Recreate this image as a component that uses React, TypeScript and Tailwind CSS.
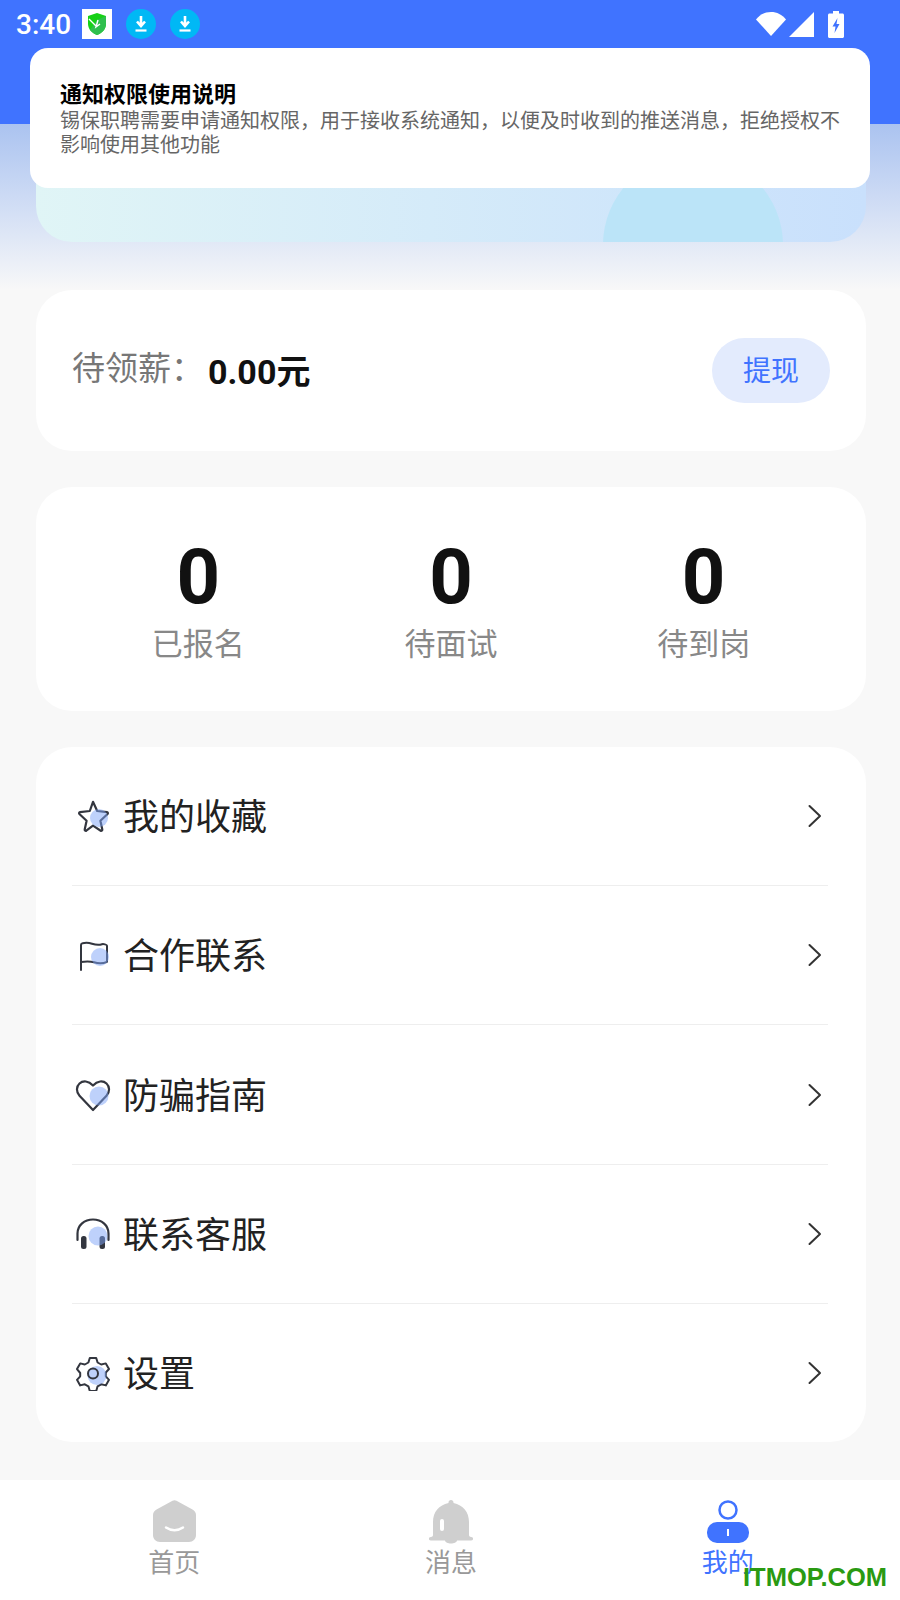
const menu = [
  { label: '我的收藏', icon: <StarIcon /> },
  { label: '合作联系', icon: <FlagIcon /> },
  { label: '防骗指南', icon: <HeartIcon /> },
  { label: '联系客服', icon: <HeadsetIcon /> },
  { label: '设置', icon: <GearIcon /> },
];

const stats = [
  { value: '0', label: '已报名' },
  { value: '0', label: '待面试' },
  { value: '0', label: '待到岗' },
];

function StarIcon() {
  return (
    <svg width="36" height="36" viewBox="0 0 36 36" fill="none">
      <path d="M18 3.800l4.200 9.200 9.800 1.200c.9.100 1.200 1.200.6 1.800l-7.200 6.800 1.900 8.800c.2.900-.8 1.600-1.600 1.100L18 27.700 11.300 32.700c-.8.500-1.800-.2-1.600-1.100l1.900-8.800-7.200-6.800c-.6-.6-.3-1.700.6-1.800l9.800-1.200z" stroke="#33363f" strokeWidth="2.200" strokeLinejoin="round" />
      <circle cx="24" cy="20" r="9" fill="#7ea3f7" fillOpacity="0.5" />
    </svg>
  );
}

function FlagIcon() {
  return (
    <svg width="36" height="36" viewBox="0 0 36 36" fill="none">
      <path d="M6 33V8c0-1 .5-1.600 1.500-1.800 3-.7 6-.7 9.500.5 4 1.300 7 1.500 10 .5 1.200-.4 5 .3 5 1.600v16c-4 1.800-8.500 1.800-13 .5-3-.8-8-.9-13-.3" stroke="#33363f" strokeWidth="2" strokeLinecap="round" strokeLinejoin="round" />
      <circle cx="25" cy="20" r="9" fill="#7ea3f7" fillOpacity="0.5" />
    </svg>
  );
}

function HeartIcon() {
  return (
    <svg width="36" height="36" viewBox="0 0 36 36" fill="none">
      <path d="M18 33L4.500 18.800C1 15 1.200 9.500 4.500 6.500c3.500-3.200 9-2.800 13.500 2 4.500-4.800 10-5.200 13.500-2 3.300 3 3.500 8.500 0 12.300z" stroke="#33363f" strokeWidth="2.200" strokeLinejoin="round" />
      <circle cx="24" cy="19" r="9.500" fill="#7ea3f7" fillOpacity="0.5" />
    </svg>
  );
}

function HeadsetIcon() {
  return (
    <svg width="36" height="36" viewBox="0 0 36 36" fill="none">
      <path d="M2.500 24v-6.500C2.500 9 9.500 3.500 18 3.500S33.500 9 33.500 17.500V24" stroke="#33363f" strokeWidth="2.200" strokeLinecap="round" />
      <rect x="6" y="20" width="5.500" height="13" rx="2.500" fill="#33363f" />
      <rect x="24.500" y="20" width="5.500" height="13" rx="2.500" fill="#33363f" />
      <circle cx="23" cy="20" r="9.500" fill="#7ea3f7" fillOpacity="0.5" />
    </svg>
  );
}

function GearIcon() {
  return (
    <svg width="36" height="36" viewBox="0 0 36 36" fill="none">
      <path d="M14.800 3h6.400l1.400 4.500 3.600 2 4.600-1.100 3.200 5.600-3.200 3.500v3.800l3.200 3.500-3.200 5.600-4.600-1.100-3.600 2-1.400 4.700h-6.400l-1.400-4.700-3.600-2-4.600 1.100-3.200-5.600 3.200-3.500V18l-3.200-3.900L5.200 8.400l4.600 1.100 3.600-2z" stroke="#33363f" strokeWidth="2" strokeLinejoin="round" />
      <circle cx="22" cy="20.500" r="9.500" fill="#7ea3f7" fillOpacity="0.5" />
      <circle cx="18" cy="18.500" r="5" stroke="#33363f" strokeWidth="2" />
    </svg>
  );
}

function Chevron() {
  return (
    <svg width="16" height="24" viewBox="0 0 16 24" fill="none">
      <path d="M2.500 2l10.500 10L2.500 22" stroke="#333" strokeWidth="2" strokeLinecap="round" strokeLinejoin="round" />
    </svg>
  );
}

function DownloadDot() {
  return (
    <div className="flex h-[30px] w-[30px] items-center justify-center rounded-full bg-[#00b8f5]">
      <svg width="14" height="18" viewBox="0 0 14 18" fill="none">
        <path d="M7 1v9M3 6.500L7 11l4-4.500" stroke="#fff" strokeWidth="2.600" />
        <path d="M1.500 15.500h11" stroke="#fff" strokeWidth="2.200" />
      </svg>
    </div>
  );
}

function StatusBar() {
  return (
    <div className="flex h-[48px] items-center pl-4 pr-[56px] text-white">
      <span className="mr-[11px] mt-[2px] text-[28px] font-medium leading-none font-['Roboto',sans-serif]">3:40</span>
      <div className="flex h-[30px] w-[30px] items-center justify-center bg-white">
        <svg width="20" height="24" viewBox="0 0 20 24">
          <path d="M10 1l9 3v8c0 5-4 9-9 11-5-2-9-6-9-11V4z" fill="#16d116" />
          <path d="M10 8l9-4v8c0 5-4 9-9 11-3-1-5-3-7-5z" fill="#2fbf4e" />
          <path d="M2 7l7 7M11 8l-2 7 4-3" stroke="#fff" strokeWidth="1.400" fill="none" />
        </svg>
      </div>
      <div className="ml-[14px] flex gap-[14px]">
        <DownloadDot />
        <DownloadDot />
      </div>
      <div className="ml-auto flex items-center">
        <svg width="30" height="26" viewBox="0 0 30 26">
          <path d="M15 25L0 8.500C4 3.500 9 1 15 1s11 2.500 15 7.500z" fill="#fff" />
        </svg>
        <svg className="ml-[3px]" width="25" height="25" viewBox="0 0 25 25">
          <path d="M25 0v25H0z" fill="#fff" />
        </svg>
        <svg className="ml-[14px]" width="16" height="27" viewBox="0 0 16 27">
          <path d="M5 0h6v2.500h3.500c.8 0 1.500.7 1.500 1.500v21.500c0 .8-.7 1.500-1.500 1.500h-13C.7 27 0 26.300 0 25.500V4c0-.8.7-1.500 1.500-1.500H5z" fill="#fff" />
          <path d="M9.500 7L4.500 15.500h3L6.500 22l5-9h-3z" fill="#4073ff" />
        </svg>
      </div>
    </div>
  );
}

function TabBar() {
  return (
    <div className="grid h-[120px] grid-cols-3 bg-white pl-9 pr-[34px] pt-5 font-['Noto_Sans_CJK_SC',sans-serif] text-[26px] leading-[34px]">
      <div className="flex flex-col items-center text-[#999]">
        <svg width="43" height="42" viewBox="0 0 43 42">
          <path d="M19.500 .8c1.300-.7 2.700-.7 4 0l16 8.700c2 1 3.500 3 3.500 5.500v20c0 4-3 7-7 7H7c-4 0-7-3-7-7V15c0-2.500 1.500-4.500 3.500-5.500z" fill="#cfcfcf" />
          <path d="M13 27.500c5 3.500 12 3.500 17 0" stroke="#fff" strokeWidth="2.500" strokeLinecap="round" fill="none" />
        </svg>
        <span className="mt-[2px]">首页</span>
      </div>
      <div className="flex flex-col items-center text-[#999]">
        <svg width="44" height="44" viewBox="0 0 44 44">
          <path d="M22 0c1.500 0 2.500 1 2.500 2.500V3C34 5 40 12 40 22v13c0 1 1 2 2 2 3 0 3 3.500 0 3.500H28c-.5 4-11.500 4-12 0H2c-3 0-3-3.500 0-3.500 1 0 2-1 2-2V22C4 12 10 5 19.500 3v-.5C19.500 1 20.500 0 22 0z" fill="#cfcfcf" />
          <rect x="11" y="19" width="4" height="12" rx="2" fill="#fff" />
        </svg>
        <span>消息</span>
      </div>
      <div className="flex flex-col items-center text-[#4073ff]">
        <svg width="44" height="44" viewBox="0 0 44 44">
          <circle cx="22" cy="10" r="8.500" fill="none" stroke="#4073ff" strokeWidth="2.500" />
          <rect x="1" y="22" width="42" height="21" rx="10" fill="#4073ff" />
          <rect x="21" y="29" width="2" height="7" fill="#fff" />
        </svg>
        <span>我的</span>
      </div>
    </div>
  );
}

export default function App() {
  return (
    <div className="relative flex h-[1600px] w-[900px] flex-col overflow-hidden bg-[#f8f8f8] font-['Noto_Sans_CJK_SC',sans-serif]">
      <div className="h-[124px] bg-[#4073ff]">
        <StatusBar />
      </div>
      <div className="h-[166px] bg-gradient-to-b from-[#abc3f0] to-[#f8f8f8] pl-9 pr-[34px]">
        <div className="relative h-[118px] overflow-hidden rounded-b-[36px] bg-gradient-to-r from-[#e0f5f6] to-[#c9e0fc]">
          <div className="absolute left-[567px] top-[31px] h-[180px] w-[180px] rounded-full bg-[#bbe4f8]" />
        </div>
      </div>

      {/* 通知权限弹层 */}
      <div className="absolute left-[30px] top-[48px] h-[140px] w-[840px] rounded-[18px] bg-white pl-[30px] pr-[28px] pt-[31px]">
        <div className="text-[22px] font-bold leading-[26px] text-black">通知权限使用说明</div>
        <div className="mt-[3px] text-[20px] leading-[24px] text-[#666]">
          锡保职聘需要申请通知权限，用于接收系统通知，以便及时收到的推送消息，拒绝授权不影响使用其他功能
        </div>
      </div>

      <div className="flex flex-1 flex-col gap-9 pl-9 pr-[34px]">
        <div className="flex h-[161px] items-center rounded-[36px] bg-white px-9">
          <span className="mb-[8px] text-[33px] text-[#777]">待领薪：</span>
          <span className="ml-[4px] mt-1 text-[34px] font-bold text-[#111] font-['Roboto','Noto_Sans_CJK_SC',sans-serif]">0.00元</span>
          <button className="ml-auto h-[65px] w-[118px] rounded-full bg-[#e3ebfd] pb-1 text-[28px] text-[#4073ff]">提现</button>
        </div>

        <div className="grid h-[224px] grid-cols-3 rounded-[36px] bg-white px-9 pt-[44px]">
          {stats.map((s) => (
            <div key={s.label} className="flex flex-col items-center">
              <span className="text-[76px] font-bold leading-[92px] text-[#111] font-['Roboto',sans-serif]">{s.value}</span>
              <span className="-mt-[1px] text-[31px] leading-[40px] text-[#888]">{s.label}</span>
            </div>
          ))}
        </div>

        <div className="flex h-[695px] flex-col rounded-[36px] bg-white pl-9 pr-[38px]">
          {menu.map((m, i) => (
            <div
              key={m.label}
              className={i < menu.length - 1 ? 'flex flex-1 items-center border-b border-[#eeeeee] pr-[5px]' : 'flex flex-1 items-center pr-[5px]'}
            >
              <div className="ml-[3px] mr-[12px]">{m.icon}</div>
              <span className="mb-1 text-[36px] text-[#222]">{m.label}</span>
              <div className="ml-auto">
                <Chevron />
              </div>
            </div>
          ))}
        </div>
      </div>

      <TabBar />
      <div className="absolute left-[743px] top-[1559px] text-[25.500px] font-bold leading-[36px] text-[#2a9a12] font-['Liberation_Sans',sans-serif]">ITMOP.COM</div>
    </div>
  );
}
